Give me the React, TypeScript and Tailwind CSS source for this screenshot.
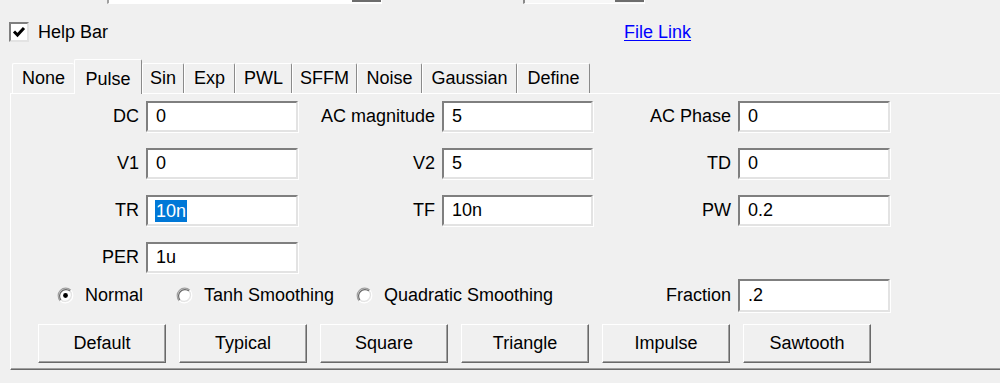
import React from "react";

type FieldProps = {
  label: string;
  value: string;
  lw: string;
  iw: string;
  h?: string;
  selected?: boolean;
};

function Field({ label, value, lw, iw, h = "h-[31px]", selected }: FieldProps) {
  return (
    <div className="flex items-center">
      <div className={`${lw} pr-[7px] text-right whitespace-nowrap`}>{label}</div>
      <div
        className={`${iw} ${h} flex items-center pl-[8px] bg-white border-2 border-t-[#7f7f7f] border-l-[#7f7f7f] border-r-[#e3e3e3] border-b-[#e3e3e3] shadow-[1px_1px_0_#ffffff]`}
      >
        {selected ? (
          <span className="bg-[#0078d7] text-white leading-[22px] -ml-[1px] px-[1px]">{value}</span>
        ) : (
          <span>{value}</span>
        )}
      </div>
    </div>
  );
}

function Radio({ checked }: { checked?: boolean }) {
  return (
    <svg width="17" height="17" viewBox="0 0 17 17" className="shrink-0">
      <circle cx="8.5" cy="8.5" r="6.5" fill="#ffffff" />
      <path d="M3.2 13.8 A7.5 7.5 0 0 1 13.8 3.2" fill="none" stroke="#a0a0a0" strokeWidth="1.2" />
      <path d="M4 13 A6.4 6.4 0 0 1 13 4" fill="none" stroke="#696969" strokeWidth="1.2" />
      <path d="M13.8 3.2 A7.5 7.5 0 0 1 3.2 13.8" fill="none" stroke="#ffffff" strokeWidth="1.2" />
      <path d="M13 4 A6.4 6.4 0 0 1 4 13" fill="none" stroke="#e3e3e3" strokeWidth="1.2" />
      {checked && <circle cx="8.5" cy="8.5" r="2.4" fill="#000000" />}
    </svg>
  );
}

function RadioItem({ label, w, checked }: { label: string; w: string; checked?: boolean }) {
  return (
    <div className={`${w} flex items-center gap-[11px] whitespace-nowrap`}>
      <Radio checked={checked} />
      <span>{label}</span>
    </div>
  );
}

function Button({ label }: { label: string }) {
  return (
    <div className="w-[128px] h-[39px] flex items-center justify-center bg-[#f0f0f0] border border-t-white border-l-white border-r-[#696969] border-b-[#696969] shadow-[inset_-1px_-1px_0_#a0a0a0]">
      {label}
    </div>
  );
}

const tabs = [
  { name: "None", w: "w-[62px]" },
  { name: "Pulse", w: "w-[68px]", active: true },
  { name: "Sin", w: "w-[42px]" },
  { name: "Exp", w: "w-[51px]" },
  { name: "PWL", w: "w-[57px]" },
  { name: "SFFM", w: "w-[65px]" },
  { name: "Noise", w: "w-[65px]" },
  { name: "Gaussian", w: "w-[95px]" },
  { name: "Define", w: "w-[73px]" },
];

export default function App() {
  return (
    <div className="w-[1000px] h-[383px] overflow-hidden bg-[#f0f0f0] text-black text-[18px] font-['Liberation_Sans',Arial,sans-serif]">
      {/* bottoms of the two combo boxes above */}
      <div className="flex h-[4px]">
        <div className="ml-[107px] w-[275px] h-[4px] flex justify-end bg-white border-l-2 border-l-[#a0a0a0] border-b border-r border-white">
          <div className="w-[29px] h-[2px] bg-[#6d6d6d]" />
        </div>
        <div className="ml-[141px] w-[122px] h-[4px] flex justify-end bg-[#f7f7f7] border-l-2 border-l-[#8a8a8a] border-b border-r border-white">
          <div className="w-[29px] h-[2px] bg-[#6d6d6d]" />
        </div>
      </div>

      {/* help bar row */}
      <div className="mt-[18px] h-[20px] flex items-center pl-[9px]">
        <div className="w-[20px] h-[20px] bg-white border-2 border-t-[#7f7f7f] border-l-[#7f7f7f] border-r-[#e3e3e3] border-b-[#e3e3e3] flex items-center justify-center">
          <svg width="14" height="14" viewBox="0 0 14 14">
            <path d="M2 6.5 L5.5 10 L12 3" fill="none" stroke="#000" strokeWidth="3" strokeLinejoin="miter" />
          </svg>
        </div>
        <div className="ml-[9px] w-[586px]">Help Bar</div>
        <a className="text-[#0000ff] underline underline-offset-2 cursor-pointer">File Link</a>
      </div>

      {/* tab strip */}
      <div className="mt-[17px] h-[34px] flex items-end pl-[12px]">
        {tabs.map((t, i) =>
          t.active ? (
            <div
              key={t.name}
              className={`${t.w} h-[35px] -mb-px relative z-10 bg-[#f0f0f0] border-l border-t border-white border-r border-r-[#8a8a8a] rounded-t-[2px] flex justify-center pt-[6px]`}
            >
              {t.name}
            </div>
          ) : (
            <div
              key={t.name}
              className={`${t.w} h-[30px] bg-[#f0f0f0] border-l border-t border-white ${
                tabs[i + 1]?.active ? "" : "border-r border-r-[#8a8a8a]"
              } rounded-t-[2px] flex items-center justify-center`}
            >
              {t.name}
            </div>
          )
        )}
      </div>

      {/* tab page */}
      <div className="ml-[10px] h-[277px] border-l border-t border-white border-b border-b-[#696969] shadow-[inset_0_-1px_0_#a0a0a0] pt-[7px] flex flex-col">
        <div className="flex flex-col gap-[16px]">
          <div className="flex">
            <Field label="DC" value="0" lw="w-[135px]" iw="w-[152px]" />
            <Field label="AC magnitude" value="5" lw="w-[144px]" iw="w-[151px]" />
            <Field label="AC Phase" value="0" lw="w-[145px]" iw="w-[152px]" />
          </div>
          <div className="flex">
            <Field label="V1" value="0" lw="w-[135px]" iw="w-[152px]" />
            <Field label="V2" value="5" lw="w-[144px]" iw="w-[151px]" />
            <Field label="TD" value="0" lw="w-[145px]" iw="w-[152px]" />
          </div>
          <div className="flex">
            <Field label="TR" value="10n" lw="w-[135px]" iw="w-[152px]" selected />
            <Field label="TF" value="10n" lw="w-[144px]" iw="w-[151px]" />
            <Field label="PW" value="0.2" lw="w-[145px]" iw="w-[152px]" />
          </div>
          <div className="flex">
            <Field label="PER" value="1u" lw="w-[135px]" iw="w-[152px]" />
          </div>
        </div>

        <div className="mt-[6px] flex items-center pl-[46px]">
          <RadioItem label="Normal" w="w-[119px]" checked />
          <RadioItem label="Tanh Smoothing" w="w-[180px]" />
          <RadioItem label="Quadratic Smoothing" w="w-[237px]" />
          <Field label="Fraction" value=".2" lw="w-[145px]" iw="w-[152px]" h="h-[33px]" />
        </div>

        <div className="mt-[12px] flex gap-[13px] pl-[27px]">
          <Button label="Default" />
          <Button label="Typical" />
          <Button label="Square" />
          <Button label="Triangle" />
          <Button label="Impulse" />
          <Button label="Sawtooth" />
        </div>
      </div>
    </div>
  );
}
